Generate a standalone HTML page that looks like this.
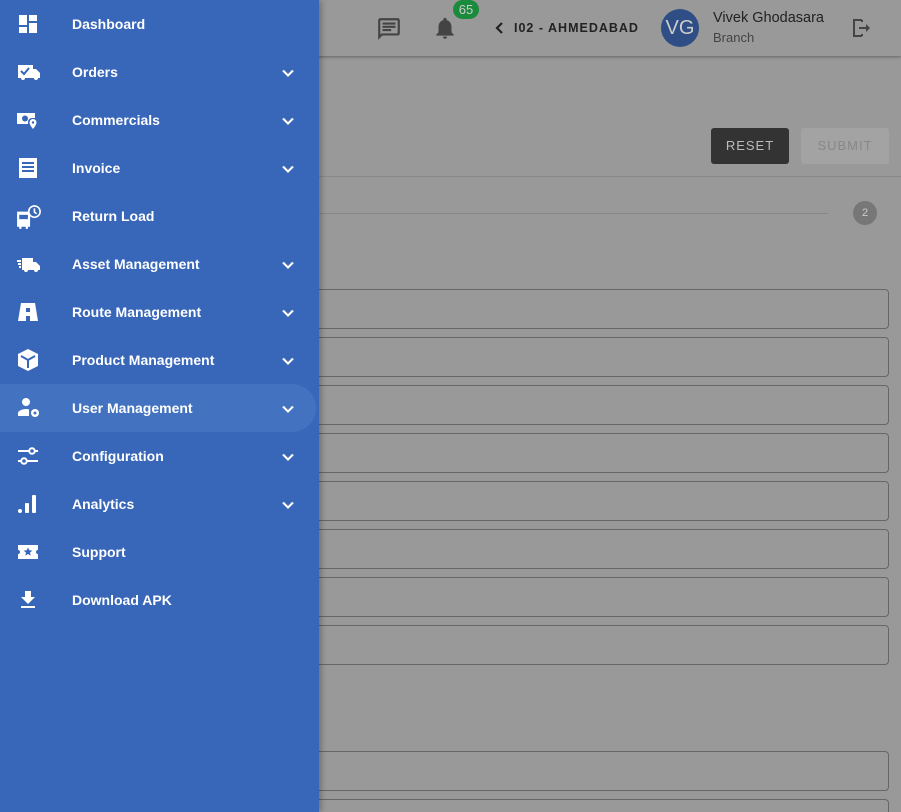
<!DOCTYPE html>
<html style="overflow:hidden;width:901px;height:812px"><head><style>
body{margin:0;width:901px;height:812px;overflow:hidden;background:#999;font-family:"Liberation Sans",sans-serif;position:relative}
.hdr{position:absolute;left:0;top:0;width:901px;height:56px;background:#999;box-shadow:0 1px 3px rgba(0,0,0,.35)}
.inp{position:absolute;left:250px;width:637px;height:38px;border:1px solid #666;border-radius:4px}
.side{position:absolute;left:0;top:0;width:319px;height:812px;background:#3866b9;box-shadow:2px 0 6px rgba(0,0,0,.3)}
.it{position:absolute;left:0;width:316px;height:48px;color:#fff;font-size:14px;font-weight:bold}
.it .t{position:absolute;left:72px;top:16px}
.it svg.i{position:absolute;left:16px;top:12px}
.it svg.c{position:absolute;left:278px;top:15px}
.act{background:#4373c0;border-radius:0 24px 24px 0}
</style></head><body>
<div class="hdr"></div>
<svg style="position:absolute;left:376px;top:16px" width="26" height="26" viewBox="0 0 24 24"><path fill="#444" d="M20 2H4c-1.1 0-2 .9-2 2v18l4-4h14c1.1 0 2-.9 2-2V4c0-1.1-.9-2-2-2zm0 14H5.2L4 17.2V4h16v12zM6 12h8v2H6zm0-3h12v2H6zm0-3h12v2H6z"/></svg>
<svg style="position:absolute;left:432px;top:15px" width="26" height="26" viewBox="0 0 24 24"><path fill="#444" d="M12 22c1.1 0 2-.9 2-2h-4c0 1.1.9 2 2 2zm6-6v-5c0-3.07-1.640-5.64-4.5-6.320V4c0-.83-.67-1.5-1.5-1.5s-1.5.67-1.5 1.5v.68C7.63 5.36 6 7.92 6 11v5l-2 2v1h16v-1l-2-2z"/></svg>
<div style="position:absolute;left:453px;top:0;width:26px;height:19px;border-radius:10px;background:#1a8a3c;color:#ccc;font-size:13px;text-align:center;line-height:19px">65</div>
<svg style="position:absolute;left:495px;top:21px" width="10" height="14" viewBox="0 0 10 14"><path d="M7 2L2 7l5 5" fill="none" stroke="#222" stroke-width="2.2"/></svg>
<div style="position:absolute;left:514px;top:21px;font-size:12.5px;font-weight:bold;letter-spacing:1px;color:#222">I02 - AHMEDABAD</div>
<div style="position:absolute;left:661px;top:9px;width:38px;height:38px;border-radius:50%;background:#2e4e85;color:#ccc;font-size:20px;text-align:center;line-height:38px">VG</div>
<div style="position:absolute;left:713px;top:10px;font-size:14.5px;color:#222">Vivek Ghodasara</div>
<div style="position:absolute;left:713px;top:30px;font-size:13px;color:#444">Branch</div>
<svg style="position:absolute;left:849px;top:16px" width="24" height="24" viewBox="0 0 24 24"><path fill="none" stroke="#444" stroke-width="2" d="M13 4H5v16h8M13 4v2M13 20v-2"/><path fill="#444" d="M10 11h7V8l4 4-4 4v-3h-7z"/></svg>
<div style="position:absolute;left:711px;top:128px;width:78px;height:36px;background:#333;border-radius:3px;color:#bbb;font-size:13px;letter-spacing:1px;text-align:center;line-height:36px">RESET</div>
<div style="position:absolute;left:801px;top:128px;width:88px;height:36px;background:#a3a3a3;border-radius:3px;color:#888;font-size:13px;letter-spacing:1px;text-align:center;line-height:36px">SUBMIT</div>
<div style="position:absolute;left:0;top:176px;width:901px;height:1px;background:#888"></div>
<div style="position:absolute;left:250px;top:213px;width:578px;height:1px;background:#888"></div>
<div style="position:absolute;left:853px;top:201px;width:24px;height:24px;border-radius:50%;background:#777;color:#ccc;font-size:11px;text-align:center;line-height:24px">2</div>
<div class="inp" style="top:289px"></div><div class="inp" style="top:337px"></div><div class="inp" style="top:385px"></div><div class="inp" style="top:433px"></div><div class="inp" style="top:481px"></div><div class="inp" style="top:529px"></div><div class="inp" style="top:577px"></div><div class="inp" style="top:625px"></div><div class="inp" style="top:751px"></div><div class="inp" style="top:799px"></div>
<div class="side">
<div class="it" style="top:0"><svg class="i" width="24" height="24" viewBox="0 0 24 24"><path fill="#fff" d="M3 13h8V3H3v10zm0 8h8v-6H3v6zm10 0h8V11h-8v10zm0-18v6h8V3h-8z"/></svg><span class="t">Dashboard</span></div>
<div class="it" style="top:48px"><svg class="i" width="26" height="24" viewBox="0 0 24 24"><path fill="#fff" d="M1 5h15v4h3l4 4v5h-2a2 2 0 0 1-4 0H8a2 2 0 0 1-4 0H1z"/><path fill="none" stroke="#3866b9" stroke-width="2" d="M4 11l3 3 5-6"/></svg><span class="t">Orders</span><svg class="c" width="20" height="20" viewBox="0 0 24 24"><path fill="none" stroke="#fff" stroke-width="2.5" d="M6 9l6 6 6-6"/></svg></div>
<div class="it" style="top:96px"><svg class="i" width="24" height="24" viewBox="0 0 24 24"><path fill="#fff" d="M1 5h18v5h-3a4 4 0 0 0-4 4v2H1z"/><circle cx="9" cy="10.5" r="3" fill="#3866b9"/><path fill="#fff" d="M17 11a3.5 3.5 0 0 1 3.5 3.5c0 2.5-3.5 6.5-3.5 6.5s-3.5-4-3.5-6.5A3.5 3.5 0 0 1 17 11z"/><circle cx="17" cy="14.5" r="1.2" fill="#3866b9"/></svg><span class="t">Commercials</span><svg class="c" width="20" height="20" viewBox="0 0 24 24"><path fill="none" stroke="#fff" stroke-width="2.5" d="M6 9l6 6 6-6"/></svg></div>
<div class="it" style="top:144px"><svg class="i" width="24" height="24" viewBox="0 0 24 24"><path fill="#fff" d="M3 2h18v20H3z"/><path stroke="#3866b9" stroke-width="2" d="M6 7h12M6 11h12M6 15h12"/></svg><span class="t">Invoice</span><svg class="c" width="20" height="20" viewBox="0 0 24 24"><path fill="none" stroke="#fff" stroke-width="2.5" d="M6 9l6 6 6-6"/></svg></div>
<div class="it" style="top:192px"><svg class="i" width="26" height="26" viewBox="0 0 24 24"><path fill="#fff" d="M1 7h12v14h-2v2H9v-2H5v2H3v-2H1z"/><rect x="3" y="10" width="8" height="4" fill="#3866b9"/><circle cx="17" cy="7" r="6" fill="#fff"/><circle cx="17" cy="7" r="4.5" fill="#3866b9"/><path stroke="#fff" stroke-width="1.5" fill="none" d="M17 4v3.5l2 1.5"/></svg><span class="t">Return Load</span></div>
<div class="it" style="top:240px"><svg class="i" width="26" height="24" viewBox="0 0 24 24"><path fill="#fff" d="M5 6h11v4h3l4 4v4h-2a2 2 0 0 1-4 0h-6a2 2 0 0 1-4 0H5zM0 8h4v2H0zm1 3h3v2H1zm1 3h2v2H2z"/></svg><span class="t">Asset Management</span><svg class="c" width="20" height="20" viewBox="0 0 24 24"><path fill="none" stroke="#fff" stroke-width="2.5" d="M6 9l6 6 6-6"/></svg></div>
<div class="it" style="top:288px"><svg class="i" width="24" height="24" viewBox="0 0 24 24"><path fill="#fff" d="M5 3h14l3 18h-8v-5h-4v5H2z"/><rect x="10" y="8" width="4" height="4" fill="#3866b9"/></svg><span class="t">Route Management</span><svg class="c" width="20" height="20" viewBox="0 0 24 24"><path fill="none" stroke="#fff" stroke-width="2.5" d="M6 9l6 6 6-6"/></svg></div>
<div class="it" style="top:336px"><svg class="i" width="24" height="24" viewBox="0 0 24 24"><path fill="#fff" d="M12 1l10 5v12l-10 5-10-5V6z"/><path fill="none" stroke="#3866b9" stroke-width="2" d="M5 8l7 4 7-4M12 12v8"/></svg><span class="t">Product Management</span><svg class="c" width="20" height="20" viewBox="0 0 24 24"><path fill="none" stroke="#fff" stroke-width="2.5" d="M6 9l6 6 6-6"/></svg></div>
<div class="it act" style="top:384px"><svg class="i" width="26" height="24" viewBox="0 0 24 24"><circle cx="9" cy="6" r="4" fill="#fff"/><path fill="#fff" d="M1 20v-3c0-2 4-4 8-4 1 0 2 .1 3 .4V20z"/><circle cx="18" cy="17" r="4" fill="#fff"/><circle cx="18" cy="17" r="1.5" fill="#4373c0"/></svg><span class="t">User Management</span><svg class="c" width="20" height="20" viewBox="0 0 24 24"><path fill="none" stroke="#fff" stroke-width="2.5" d="M6 9l6 6 6-6"/></svg></div>
<div class="it" style="top:432px"><svg class="i" width="24" height="24" viewBox="0 0 24 24"><path stroke="#fff" stroke-width="2" fill="none" d="M2 7h11M19 7h3M2 17h3M11 17h11"/><circle cx="16" cy="7" r="2.8" stroke="#fff" stroke-width="2" fill="none"/><circle cx="8" cy="17" r="2.8" stroke="#fff" stroke-width="2" fill="none"/></svg><span class="t">Configuration</span><svg class="c" width="20" height="20" viewBox="0 0 24 24"><path fill="none" stroke="#fff" stroke-width="2.5" d="M6 9l6 6 6-6"/></svg></div>
<div class="it" style="top:480px"><svg class="i" width="24" height="24" viewBox="0 0 24 24"><circle cx="4" cy="19" r="2" fill="#fff"/><rect x="9" y="11" width="4" height="10" rx="1" fill="#fff"/><rect x="16" y="3" width="4" height="18" rx="1" fill="#fff"/></svg><span class="t">Analytics</span><svg class="c" width="20" height="20" viewBox="0 0 24 24"><path fill="none" stroke="#fff" stroke-width="2.5" d="M6 9l6 6 6-6"/></svg></div>
<div class="it" style="top:528px"><svg class="i" width="24" height="24" viewBox="0 0 24 24"><path fill="#fff" d="M2 5h20v5a2 2 0 0 0 0 4v5H2v-5a2 2 0 0 0 0-4z"/><path fill="#3866b9" d="M12 7.5l1.3 2.8 3 .3-2.3 2 .7 3-2.7-1.6-2.7 1.6.7-3-2.3-2 3-.3z"/></svg><span class="t">Support</span></div>
<div class="it" style="top:576px"><svg class="i" width="24" height="24" viewBox="0 0 24 24"><path fill="#fff" d="M19 9h-4V3H9v6H5l7 7 7-7zM5 18v2h14v-2z"/></svg><span class="t">Download APK</span></div>
</div>
</body></html>
